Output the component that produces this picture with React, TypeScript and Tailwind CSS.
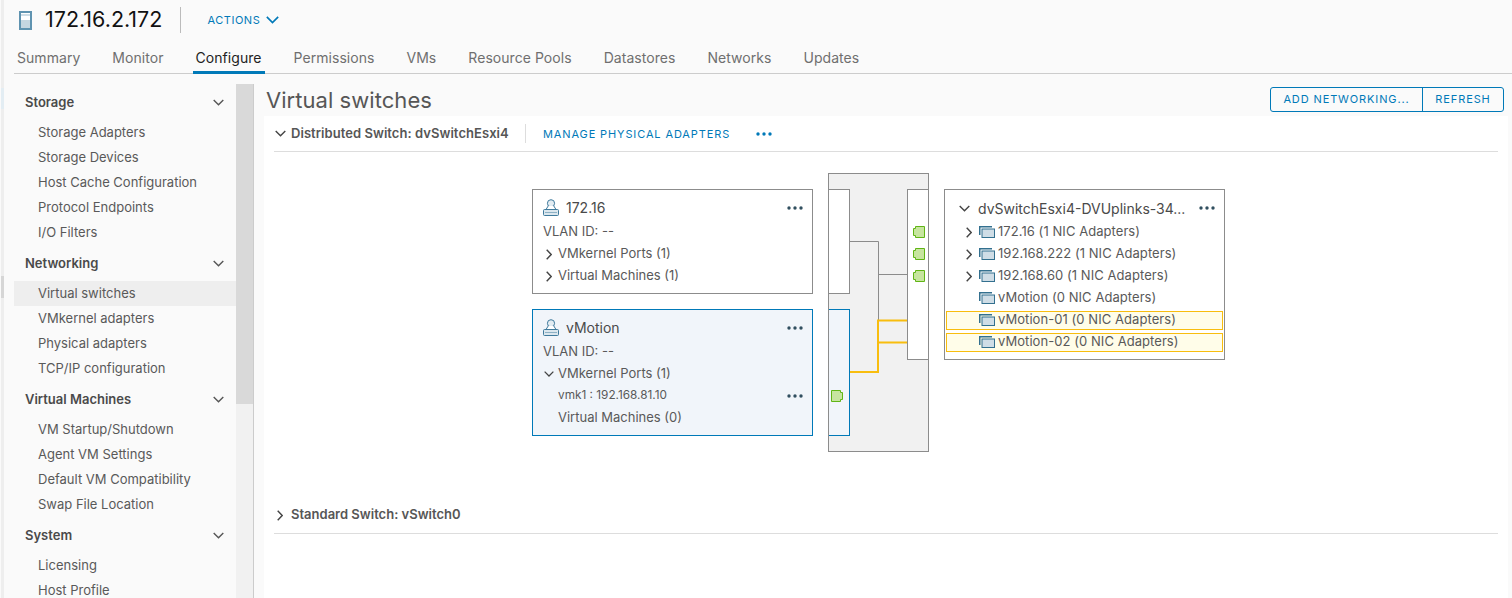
const sections = [
  { title: 'Storage', items: ['Storage Adapters', 'Storage Devices', 'Host Cache Configuration', 'Protocol Endpoints', 'I/O Filters'] },
  { title: 'Networking', items: ['Virtual switches', 'VMkernel adapters', 'Physical adapters', 'TCP/IP configuration'] },
  { title: 'Virtual Machines', items: ['VM Startup/Shutdown', 'Agent VM Settings', 'Default VM Compatibility', 'Swap File Location'] },
  { title: 'System', items: ['Licensing', 'Host Profile'] },
]

const tabs = ['Summary', 'Monitor', 'Configure', 'Permissions', 'VMs', 'Resource Pools', 'Datastores', 'Networks', 'Updates']

const uplinks = [
  { label: '172.16 (1 NIC Adapters)', arrow: true },
  { label: '192.168.222 (1 NIC Adapters)', arrow: true },
  { label: '192.168.60 (1 NIC Adapters)', arrow: true },
  { label: 'vMotion (0 NIC Adapters)' },
  { label: 'vMotion-01 (0 NIC Adapters)', hot: true },
  { label: 'vMotion-02 (0 NIC Adapters)', hot: true },
]

// clarity style chevrons, cropped tight to the stroke
function Down({ w = 11, color = '#555555' }: { w?: number; color?: string }) {
  return (
    <svg width={w} height={Math.round(w * 0.6)} viewBox="0 0 11 6.6" className="shrink-0">
      <path d="M0.7 0.7L5.5 5.5L10.3 0.7" fill="none" stroke={color} strokeWidth="1.4" />
    </svg>
  )
}

function Right() {
  return (
    <svg width="6" height="11" viewBox="0 0 6 11" className="shrink-0">
      <path d="M0.7 0.7L5.2 5.5L0.7 10.3" fill="none" stroke="#444444" strokeWidth="1.4" />
    </svg>
  )
}

function Dots({ color = '#314f5f' }: { color?: string }) {
  return (
    <svg width="16" height="4" viewBox="0 0 16 4" className="shrink-0">
      <circle cx="2" cy="2" r="1.7" fill={color} />
      <circle cx="8" cy="2" r="1.7" fill={color} />
      <circle cx="14" cy="2" r="1.7" fill={color} />
    </svg>
  )
}

function HostIcon() {
  return (
    <svg width="13" height="19" viewBox="0 0 13 19" className="shrink-0">
      <rect x="1" y="1" width="11" height="17" fill="#ffffff" stroke="#5f93b0" strokeWidth="2" />
      <rect x="2" y="9" width="9" height="8" fill="#c5d6e0" />
      <rect x="2" y="3.5" width="9" height="1" fill="#9dbccd" />
    </svg>
  )
}

function KernelIcon() {
  return (
    <svg width="16" height="17" viewBox="0 0 16 17" className="shrink-0">
      <circle cx="8" cy="4.3" r="3.6" fill="#e3ecf2" stroke="#3f7a9c" />
      <path d="M5.2 7L3 10.5H13L10.8 7" fill="#ffffff" stroke="#3f7a9c" />
      <rect x="0.5" y="10.5" width="15" height="6" rx="1" fill="#dbe7ee" stroke="#3f7a9c" />
      <path d="M2.5 13.5h11" stroke="#3f7a9c" strokeDasharray="1 1" />
    </svg>
  )
}

function GroupIcon() {
  return (
    <svg width="16" height="12" viewBox="0 0 16 12" className="shrink-0">
      <path d="M0.75 9V0.75H13" fill="none" stroke="#33708f" strokeWidth="1.5" />
      <rect x="3" y="3" width="12.5" height="8.5" fill="#cfdde6" stroke="#33708f" />
    </svg>
  )
}

// RJ45 style port, the notch faces the wire side
function Port({ className, flip }: { className: string; flip?: boolean }) {
  return (
    <svg width="12" height="12" viewBox="0 0 12 12" className={`absolute ${className}`}>
      <path
        d={flip ? 'M0.5 0.5H9.5V2.5H11.5V9.5H9.5V11.5H0.5Z' : 'M2.5 0.5H11.5V11.5H2.5V9.5H0.5V2.5H2.5Z'}
        fill="#c7e59f"
        stroke="#60b515"
      />
    </svg>
  )
}

function PortRow({ label, open }: { label: string; open?: boolean }) {
  return (
    <div className="flex items-center h-[22px]">
      <div className={`w-[15px] flex ${open ? 'pl-px' : 'pl-[3px]'}`}>
        {open ? <Down w={10} color="#444444" /> : <Right />}
      </div>
      <span>{label}</span>
    </div>
  )
}

function App() {
  return (
    <div className="flex w-[1512px] h-[598px] overflow-hidden bg-[#fafafa] text-[#595959] text-[13px]" style={{ fontFamily: 'Inter, "Liberation Sans", sans-serif' }}>
      {/* window edge */}
      <div className="w-[4px] shrink-0 flex flex-col bg-[#eeeeee] border-l border-[#fafafa]">
        <div className="h-[88px]" />
        <div className="h-[21px] bg-[#e3edf3]" />
        <div className="h-[167px]" />
        <div className="h-[22px] bg-[#d6d6d6]" />
      </div>

      <div className="flex-1 min-w-0 flex flex-col">
        {/* object header */}
        <div className="flex items-center h-[40px] pl-[15px]">
          <HostIcon />
          <span className="ml-[13px] text-[21.5px] text-[#111] leading-none">172.16.2.172</span>
          <div className="ml-[18px] w-px h-[26px] bg-[#bbbbbb]" />
          <button className="ml-[26px] flex items-center gap-[6px] text-[11px] tracking-[0.05em] text-[#0079b8]">
            ACTIONS
            <Down w={13} color="#0079b8" />
          </button>
        </div>

        {/* tabs */}
        <div className="flex gap-[26px] h-[34px] ml-[10px] border-b border-[#cccccc]">
          {tabs.map((t) => (
            <div
              key={t}
              className={`h-[34px] px-[3px] flex items-center text-[14px] tracking-[0.05px] ${t === 'Configure' ? 'text-[#222] border-b-[3px] border-[#0079b8] pt-[3px]' : 'text-[#6f6f6f]'}`}
            >
              {t}
            </div>
          ))}
        </div>

        <div className="flex-1 min-h-0 flex">
          {/* sidebar */}
          <div className="w-[222px] ml-[10px] pt-[11px] shrink-0 overflow-hidden">
            {sections.map((s) => (
              <div key={s.title} className="mb-px">
                <div className="h-[35px] flex items-center justify-between pl-[11px] pr-[12px] font-semibold text-[#4a4a4a] text-[13px]">
                  {s.title}
                  <Down />
                </div>
                {s.items.map((i) => (
                  <div key={i} className={`h-[25px] flex items-center pl-[24px] ${i === 'Virtual switches' ? 'bg-[#eeeeee]' : ''}`}>
                    {i}
                  </div>
                ))}
              </div>
            ))}
          </div>

          {/* scrollbar */}
          <div className="w-[18px] mt-[10px] shrink-0 bg-[#f1f1f1] border-r border-[#cccccc]">
            <div className="h-[320px] bg-[#d9d9d9]" />
          </div>

          {/* main */}
          <div className="flex-1 min-w-0 flex flex-col pl-[10px] pr-[4px]">
            <div className="h-[42px] shrink-0 flex items-center justify-between pt-[10px] pl-[2px] pr-[4px]">
              <h1 className="text-[22px] tracking-[0.05px] text-[#565656] leading-none">Virtual switches</h1>
              <div className="flex h-[25px] mt-[-1px] border border-[#0079b8] rounded-[3px] text-[11px] tracking-[0.08em] text-[#0079b8]">
                <div className="w-[152px] flex items-center justify-center border-r border-[#0079b8]">ADD NETWORKING...</div>
                <div className="w-[80px] flex items-center justify-center">REFRESH</div>
              </div>
            </div>

            <div className="flex-1 bg-white px-[10px]">
              <div className="h-[36px] flex items-center border-b border-[#dddddd]">
                <div className="ml-px"><Down color="#444444" /></div>
                <span className="ml-[5px] font-semibold text-[13px] tracking-[0.05px] text-[#565656] w-[234px]">Distributed Switch: dvSwitchEsxi4</span>
                <div className="w-px h-[19px] bg-[#dddddd]" />
                <span className="ml-[17px] pt-px text-[11px] tracking-[0.08em] text-[#0079b8]">MANAGE PHYSICAL ADAPTERS</span>
                <div className="ml-[26px]"><Dots color="#0079b8" /></div>
              </div>

              {/* topology diagram, canvas origin at page (274,152) */}
              <div className="relative h-[345px]">
                <div className="absolute left-[554px] top-[21px] w-[101px] h-[279px] bg-[#f1f1f1] border border-[#8c8c8c]" />
                <div className="absolute left-[555px] top-[37px] w-[21px] h-[105px] bg-white border border-l-0 border-[#8c8c8c]" />
                <div className="absolute left-[555px] top-[157px] w-[21px] h-[127px] bg-[#f1f5fa] border border-l-0 border-[#0079b8]" />
                <div className="absolute left-[633px] top-[37px] w-[21px] h-[171px] bg-white border border-r-0 border-[#8c8c8c]" />

                <svg className="absolute left-[554px] top-[21px]" width="101" height="279" viewBox="0 0 101 279">
                  <path d="M22 68.5H50.5V147M50.5 101.5H79" fill="none" stroke="#8c8c8c" />
                  <path d="M22 199H50V147.5H79M50 169.5H79" fill="none" stroke="#f8bd0e" strokeWidth="2" />
                </svg>

                <Port className="left-[639px] top-[74px]" />
                <Port className="left-[639px] top-[96px]" />
                <Port className="left-[639px] top-[118px]" />
                <Port className="left-[557px] top-[238px]" flip />

                <div className="absolute left-[258px] top-[37px] w-[281px] h-[105px] bg-white border border-[#8c8c8c] pl-[10px] pr-[9px]">
                  <div className="flex items-center h-[35px]">
                    <KernelIcon />
                    <span className="ml-[7px] text-[14px] text-[#4a4a4a]">172.16</span>
                    <div className="ml-auto"><Dots /></div>
                  </div>
                  <div className="h-[22px] flex items-center -mt-[4px]">VLAN ID: --</div>
                  <PortRow label="VMkernel Ports (1)" />
                  <PortRow label="Virtual Machines (1)" />
                </div>

                <div className="absolute left-[258px] top-[157px] w-[281px] h-[127px] bg-[#f1f5fa] border border-[#0079b8] pl-[10px] pr-[9px]">
                  <div className="flex items-center h-[35px]">
                    <KernelIcon />
                    <span className="ml-[7px] text-[14px] text-[#4a4a4a]">vMotion</span>
                    <div className="ml-auto"><Dots /></div>
                  </div>
                  <div className="h-[22px] flex items-center -mt-[4px]">VLAN ID: --</div>
                  <PortRow label="VMkernel Ports (1)" open />
                  <div className="h-[22px] flex items-center justify-between pl-[15px] text-[11.8px]">
                    vmk1 : 192.168.81.10
                    <Dots />
                  </div>
                  <div className="h-[22px] flex items-center pl-[15px]">Virtual Machines (0)</div>
                </div>

                <div className="absolute left-[670px] top-[37px] w-[281px] h-[171px] bg-white border border-[#8c8c8c] px-px">
                  <div className="flex items-center h-[36px] pl-[13px] pr-[8px]">
                    <Down color="#444444" />
                    <span className="ml-[8px] text-[14px] text-[#4a4a4a]">dvSwitchEsxi4-DVUplinks-34...</span>
                    <div className="ml-auto"><Dots /></div>
                  </div>
                  <div className="flex flex-col -mt-[5px] tracking-[0.06px]">
                    {uplinks.map((u) => (
                      <div key={u.label} className={`h-[22px] flex items-center ${u.hot ? 'py-[1.5px]' : ''}`}>
                        <div className={`flex items-center w-full h-full ${u.hot ? 'pl-[32px] bg-[#fffde9] border border-[#f8bd0e]' : 'pl-[33px]'}`}>
                          {u.arrow && <div className="ml-[-13px] mr-[7px] flex"><Right /></div>}
                          <GroupIcon />
                          <span className="ml-[3px]">{u.label}</span>
                        </div>
                      </div>
                    ))}
                  </div>
                </div>
              </div>

              <div className="h-[37px] flex items-center border-b border-[#dddddd]">
                <div className="ml-[3px] flex"><Right /></div>
                <span className="ml-[8px] font-semibold text-[13px] text-[#565656]">Standard Switch: vSwitch0</span>
              </div>
            </div>
          </div>
        </div>
      </div>
    </div>
  )
}

export default App
